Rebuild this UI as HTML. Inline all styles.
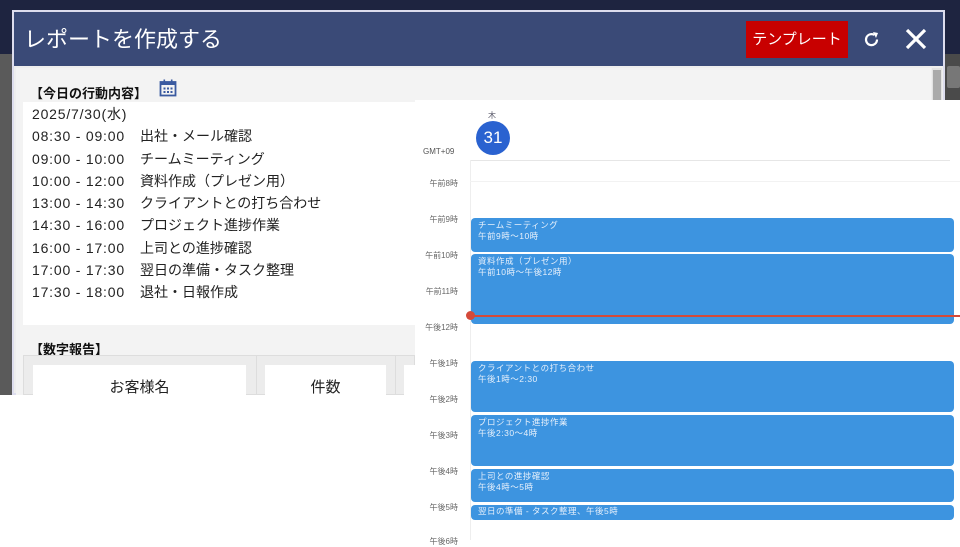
<!DOCTYPE html>
<html><head><meta charset="utf-8"><style>
*{margin:0;padding:0;box-sizing:border-box}
body{width:960px;height:540px;overflow:hidden;position:relative;background:#fff;font-family:"Liberation Sans","Noto Sans CJK JP",sans-serif}
.a{position:absolute}
.t{font-size:14px;color:#222;line-height:22.3px}
.t b{font-weight:normal;letter-spacing:0.8px;display:inline-block;width:108px}
.lab{position:absolute;left:420px;width:38px;text-align:right;font-size:8px;color:#666}
.ev{position:absolute;left:471px;width:483px;background:#3d94e0;border-radius:4px;color:#e6f0fb;font-size:8.5px;line-height:11px;padding:2px 7px;letter-spacing:.5px}
</style></head><body>
<div class="a" style="left:0;top:0;width:960px;height:395px;background:#5a5a5a"></div>
<div class="a" style="left:0;top:0;width:960px;height:54px;background:#1e2440"></div>
<div class="a" style="left:944px;top:54px;width:16px;height:50px;background:#4a4a4a"></div>
<div class="a" style="left:947px;top:66px;width:13px;height:22px;background:#777;border-radius:2px"></div>
<div class="a" style="left:12px;top:10px;width:933px;height:385px;background:#eee;border:2px solid #dde"></div>
<div class="a" style="left:14px;top:12px;width:929px;height:54px;background:#3a4a77"></div>
<div class="a" style="left:24px;top:25px;color:#fff;font-size:22px;line-height:30px">レポートを作成する</div>
<div class="a" style="left:746px;top:21px;width:102px;height:37px;background:#c80000;color:#fff;font-size:15px;line-height:37px;text-align:center">テンプレート</div>
<svg class="a" style="left:862px;top:30px" width="20" height="20" viewBox="0 0 20 20"><path d="M15 9.5A5.5 5.5 0 1 1 12.5 5" fill="none" stroke="#fff" stroke-width="2.2"/><path d="M11 2l5 1-2 5z" fill="#fff"/></svg>
<svg class="a" style="left:904px;top:27px" width="24" height="24" viewBox="0 0 24 24"><path d="M3 3L21 21M21 3L3 21" stroke="#fff" stroke-width="3.2"/></svg>
<div class="a" style="left:16px;top:68px;width:915px;height:327px;background:#f3f3f3"></div>
<div class="a" style="left:932px;top:68px;width:10px;height:327px;background:#e2e2e2"></div>
<div class="a" style="left:933px;top:70px;width:8px;height:34px;background:#aaa"></div>
<div class="a" style="left:30px;top:83px;font-size:13px;font-weight:bold;color:#111">【今日の行動内容】</div>
<svg class="a" style="left:159px;top:79px" width="18" height="18" viewBox="0 0 18 18"><rect x="1.5" y="3" width="15" height="13.5" fill="none" stroke="#3a5aa0" stroke-width="1.8"/><rect x="1.5" y="3" width="15" height="3" fill="#3a5aa0"/><rect x="4.5" y="0.5" width="1.6" height="3.5" fill="#3a5aa0"/><rect x="11.9" y="0.5" width="1.6" height="3.5" fill="#3a5aa0"/><g fill="#3a5aa0"><rect x="4.5" y="8.5" width="2" height="2"/><rect x="8" y="8.5" width="2" height="2"/><rect x="11.5" y="8.5" width="2" height="2"/><rect x="4.5" y="12" width="2" height="2"/><rect x="8" y="12" width="2" height="2"/><rect x="11.5" y="12" width="2" height="2"/></g></svg>
<div class="a" style="left:23px;top:102px;width:392px;height:223px;background:#fff"></div>
<div class="a t" style="left:32px;top:103px;white-space:pre"><b style="width:auto">2025/7/30(水)</b>
<b>08:30 - 09:00</b>出社・メール確認
<b>09:00 - 10:00</b>チームミーティング
<b>10:00 - 12:00</b>資料作成（プレゼン用）
<b>13:00 - 14:30</b>クライアントとの打ち合わせ
<b>14:30 - 16:00</b>プロジェクト進捗作業
<b>16:00 - 17:00</b>上司との進捗確認
<b>17:00 - 17:30</b>翌日の準備・タスク整理
<b>17:30 - 18:00</b>退社・日報作成</div>
<div class="a" style="left:30px;top:339px;font-size:13px;font-weight:bold;color:#111">【数字報告】</div>
<div class="a" style="left:23px;top:355px;width:392px;height:40px;background:#ececec;border:1px solid #ddd"></div>
<div class="a" style="left:33px;top:365px;width:213px;height:30px;background:#fff;text-align:center;font-size:15px;padding-top:13px;color:#222;overflow:hidden;line-height:20px">お客様名</div>
<div class="a" style="left:256px;top:356px;width:1px;height:39px;background:#ddd"></div>
<div class="a" style="left:265px;top:365px;width:121px;height:30px;background:#fff;text-align:center;font-size:15px;padding-top:13px;color:#222;overflow:hidden;line-height:20px">件数</div>
<div class="a" style="left:395px;top:356px;width:1px;height:39px;background:#ddd"></div>
<div class="a" style="left:404px;top:365px;width:11px;height:30px;background:#fff"></div>
<!-- calendar -->
<div class="a" style="left:415px;top:100px;width:545px;height:440px;background:#fff"></div>
<div class="a" style="left:488px;top:110px;font-size:8px;color:#556">木</div>
<div class="a" style="left:476px;top:121px;width:34px;height:34px;border-radius:50%;background:#2a62d0;color:#fff;font-size:17px;line-height:34px;text-align:center">31</div>
<div class="a" style="left:423px;top:147px;font-size:8px;color:#555">GMT+09</div>
<div class="a" style="left:470px;top:160px;width:480px;height:1px;background:#e6e6e6"></div>
<div class="a" style="left:470px;top:160px;width:1px;height:380px;background:#eee"></div>
<div class="a" style="left:470px;top:181px;width:490px;height:1px;background:#f2f2f2"></div>
<div class="lab" style="top:178px">午前8時</div>
<div class="lab" style="top:214px">午前9時</div>
<div class="lab" style="top:250px">午前10時</div>
<div class="lab" style="top:286px">午前11時</div>
<div class="lab" style="top:322px">午後12時</div>
<div class="lab" style="top:358px">午後1時</div>
<div class="lab" style="top:394px">午後2時</div>
<div class="lab" style="top:430px">午後3時</div>
<div class="lab" style="top:466px">午後4時</div>
<div class="lab" style="top:502px">午後5時</div>
<div class="lab" style="top:536px">午後6時</div>
<div class="ev" style="top:218px;height:34px">チームミーティング<br>午前9時～10時</div>
<div class="ev" style="top:254px;height:70px">資料作成（プレゼン用）<br>午前10時～午後12時</div>
<div class="a" style="left:470px;top:315px;width:490px;height:1.5px;background:#d44a3a"></div>
<div class="a" style="left:466px;top:311px;width:9px;height:9px;border-radius:50%;background:#d44a3a"></div>
<div class="ev" style="top:361px;height:51px">クライアントとの打ち合わせ<br>午後1時～2:30</div>
<div class="ev" style="top:415px;height:51px">プロジェクト進捗作業<br>午後2:30～4時</div>
<div class="ev" style="top:469px;height:33px">上司との進捗確認<br>午後4時～5時</div>
<div class="ev" style="top:505px;height:15px;padding-top:1px">翌日の準備 - タスク整理、午後5時</div>
</body></html>
